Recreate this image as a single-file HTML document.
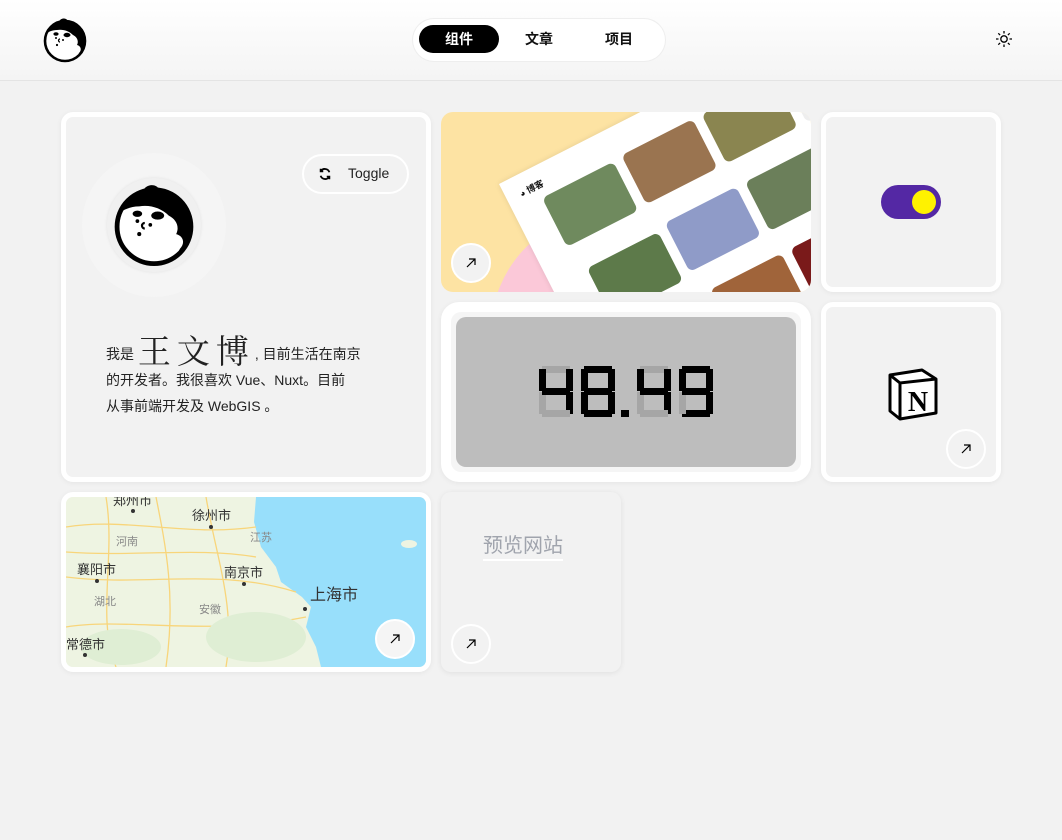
<!DOCTYPE html>
<html><head><meta charset="utf-8">
<style>
*{box-sizing:border-box;margin:0;padding:0}
body{width:1062px;height:840px;background:#f2f2f2;font-family:"Liberation Sans","Noto Sans CJK SC",sans-serif;position:relative;overflow:hidden;color:#111}
.hdr{position:absolute;left:0;top:0;width:1062px;height:81px;background:linear-gradient(#fff,#f4f4f4);border-bottom:1px solid #e4e4e4}
.nav{position:absolute;left:413px;top:19px;width:252px;height:42px;background:#fff;border-radius:21px;box-shadow:0 0 0 1px #eee}
.nav span{position:absolute;top:6px;height:28px;width:80px;line-height:28px;text-align:center;font-size:14px;font-weight:bold}
.card{position:absolute;background:#f2f2f2;border:5px solid #fff;border-radius:12px;box-shadow:0 1px 6px rgba(0,0,0,.06);overflow:hidden}
.arr{position:absolute;width:40px;height:40px;border-radius:50%;background:#f2f2f2;border:2px solid #fff}
.arr svg{position:absolute;left:11px;top:11px}
.th{position:absolute;width:80px;height:55px;border-radius:6px}
</style></head><body>
<svg width="0" height="0" style="position:absolute">
  <defs>
    <clipPath id="fc"><circle cx="26" cy="28" r="20"/></clipPath>
    <g id="face">
      <circle cx="26" cy="28" r="20" fill="#fff"/>
      <g clip-path="url(#fc)">
        <path d="M0 0 H52 V52 H45 C40 48 38 44 40 40 C43 37 42 33 38 32 C40 28 38 24 34 22 C30 18 24 16 18 17 C12 17 8 20 4 22 Z" fill="#000"/>
      </g>
      <circle cx="26" cy="28" r="20" fill="none" stroke="#000" stroke-width="2.6"/>
      <path d="M20 9 C21 5 27 4 29 8 C33 8 37 10 38 13 L26 13Z" fill="#000"/>
      <ellipse cx="28" cy="22" rx="3.5" ry="2.2" fill="#000"/>
      <ellipse cx="17" cy="21" rx="2.6" ry="1.7" fill="#000"/>
      <circle cx="17" cy="25" r="1"/><circle cx="24" cy="27" r="1"/><path d="M21 26 a1.5 1.5 0 1 0 0 3" fill="none" stroke="#000" stroke-width="1.2"/><circle cx="18" cy="32" r="1.1"/>
    </g>
  </defs>
</svg>
<div class="hdr">
  <svg style="position:absolute;left:39px;top:13px" width="52" height="52" viewBox="0 0 52 52"><use href="#face"/></svg>
  <div class="nav"><span style="left:6px;background:#000;color:#fff;border-radius:14px">组件</span><span style="left:86px">文章</span><span style="left:166px">项目</span></div>
  <svg style="position:absolute;left:995px;top:30px" width="18" height="18" viewBox="0 0 18 18" stroke="#000" stroke-width="1.3" fill="none"><circle cx="9" cy="9" r="3.2"/><path d="M9 1v2.5M9 14.5V17M1 9h2.5M14.5 9H17M3.3 3.3l1.8 1.8M12.9 12.9l1.8 1.8M3.3 14.7l1.8-1.8M12.9 5.1l1.8-1.8"/></svg>
</div>

<!-- profile card -->
<div class="card" style="left:61px;top:112px;width:370px;height:370px">
  <div style="position:absolute;left:16px;top:36px;width:144px;height:144px;border-radius:50%;background:#f5f5f5"></div>
  <div style="position:absolute;left:41px;top:61px;width:94px;height:94px;border-radius:50%;background:#f0f0f0;box-shadow:0 0 3px rgba(0,0,0,.08)"></div>
  <svg style="position:absolute;left:40px;top:58px" width="96" height="96" viewBox="0 0 52 52"><use href="#face"/></svg>
  <div style="position:absolute;left:236px;top:37px;width:107px;height:40px;border:2px solid #fff;border-radius:20px;font-size:14px;color:#222">
    <svg style="position:absolute;left:14px;top:11px" width="14" height="14" viewBox="0 0 16 16" fill="none" stroke="#000" stroke-width="2"><path d="M13 6A5.5 5.5 0 0 0 3 5M3 10a5.5 5.5 0 0 0 10 1"/><path d="M3 2v3h3M13 14v-3h-3"/></svg>
    <span style="position:absolute;left:44px;top:9px">Toggle</span>
  </div>
  <div style="position:absolute;left:40px;top:220px;width:300px;font-size:14px;line-height:26px;color:#222">
    我是 <span style="font-family:'Noto Serif CJK SC',serif;font-size:33px;letter-spacing:6px;vertical-align:-4px">王文博</span>, 目前生活在南京<br>的开发者。我很喜欢 Vue、Nuxt。目前<br>从事前端开发及 WebGIS 。
  </div>
</div>

<!-- blog card -->
<div style="position:absolute;left:441px;top:112px;width:370px;height:180px;border-radius:12px;overflow:hidden;background:#fde3a3">
  <div style="position:absolute;left:50px;top:100px;width:240px;height:240px;border-radius:50%;background:#fbc8d8"></div>
  <div style="position:absolute;left:58px;top:72px;width:380px;height:260px;background:#fff;transform:rotate(-27deg);transform-origin:0 0;box-shadow:0 0 6px rgba(0,0,0,.1)">
    <div style="position:absolute;left:14px;top:12px;font-size:9px;font-weight:bold">◕ 博客</div>
    <div class="th" style="left:32px;top:32px;background:#6f8a5e"></div>
    <div class="th" style="left:122px;top:30px;background:#9a7450"></div>
    <div class="th" style="left:212px;top:30px;background:#8a8550"></div>
    <div class="th" style="left:302px;top:30px;background:#eee"></div>
    <div class="th" style="left:40px;top:115px;background:#5d7a4a"></div>
    <div class="th" style="left:130px;top:110px;background:#8f9bc8"></div>
    <div class="th" style="left:220px;top:110px;background:#6b7f5a"></div>
    <div class="th" style="left:50px;top:195px;background:#c8102a"></div>
    <div class="th" style="left:140px;top:190px;background:#a0643a"></div>
    <div class="th" style="left:230px;top:190px;background:#7a1a1a"></div>
  </div>
  <div class="arr" style="left:10px;top:131px"><svg width="14" height="14" viewBox="0 0 14 14" stroke="#000" fill="none" stroke-width="1.2"><path d="M3 11L11 3M5 3h6v6"/></svg></div>
</div>

<!-- switch card -->
<div class="card" style="left:821px;top:112px;width:180px;height:180px">
  <div style="position:absolute;left:55px;top:68px;width:60px;height:34px;border-radius:17px;background:#5428a4"></div>
  <div style="position:absolute;left:86px;top:73px;width:24px;height:24px;border-radius:50%;background:#fff200"></div>
</div>

<!-- clock card -->
<div style="position:absolute;left:441px;top:302px;width:370px;height:180px;border-radius:18px;background:#fff;box-shadow:0 1px 6px rgba(0,0,0,.06)">
  <div style="position:absolute;left:10px;top:10px;width:350px;height:160px;border-radius:10px;background:#f5f5f5"></div>
  <div style="position:absolute;left:15px;top:15px;width:340px;height:150px;border-radius:10px;background:#bdbdbd"></div>
  <svg style="position:absolute;left:98px;top:64px" width="180" height="52" viewBox="0 0 180 52">
    <g>
      <rect x="3" y="0" width="28" height="7" fill="#a6a6a6"/><rect x="27" y="3" width="7" height="22" fill="#000"/><rect x="27" y="26" width="7" height="22" fill="#000"/><rect x="3" y="44" width="28" height="7" fill="#a6a6a6"/><rect x="0" y="26" width="7" height="22" fill="#a6a6a6"/><rect x="0" y="3" width="7" height="22" fill="#000"/><rect x="3" y="22" width="28" height="7" fill="#000"/>
    </g>
    <g transform="translate(42,0)" fill="#000">
      <rect x="3" y="0" width="28" height="7"/><rect x="27" y="3" width="7" height="22"/><rect x="27" y="26" width="7" height="22"/><rect x="3" y="44" width="28" height="7"/><rect x="0" y="26" width="7" height="22"/><rect x="0" y="3" width="7" height="22"/><rect x="3" y="22" width="28" height="7"/>
    </g>
    <rect x="82" y="44" width="8" height="7" fill="#000"/>
    <g transform="translate(98,0)">
      <rect x="3" y="0" width="28" height="7" fill="#a6a6a6"/><rect x="27" y="3" width="7" height="22" fill="#000"/><rect x="27" y="26" width="7" height="22" fill="#000"/><rect x="3" y="44" width="28" height="7" fill="#a6a6a6"/><rect x="0" y="26" width="7" height="22" fill="#a6a6a6"/><rect x="0" y="3" width="7" height="22" fill="#000"/><rect x="3" y="22" width="28" height="7" fill="#000"/>
    </g>
    <g transform="translate(140,0)">
      <rect x="3" y="0" width="28" height="7" fill="#000"/><rect x="27" y="3" width="7" height="22" fill="#000"/><rect x="27" y="26" width="7" height="22" fill="#000"/><rect x="3" y="44" width="28" height="7" fill="#000"/><rect x="0" y="26" width="7" height="22" fill="#a6a6a6"/><rect x="0" y="3" width="7" height="22" fill="#000"/><rect x="3" y="22" width="28" height="7" fill="#000"/>
    </g>
  </svg>
</div>

<!-- notion card -->
<div class="card" style="left:821px;top:302px;width:180px;height:180px">
  <svg style="position:absolute;left:60px;top:60px" width="52" height="54" viewBox="0 0 52 54">
    <path d="M4 8 L36 3 L50 12 L50 46 L14 52 L4 44 Z" fill="#fff" stroke="#000" stroke-width="3" stroke-linejoin="round"/>
    <path d="M4 8 L14 16 L50 12 M14 16 L14 52" fill="none" stroke="#000" stroke-width="3"/>
    <text x="32" y="44" text-anchor="middle" font-family="Liberation Serif,serif" font-weight="bold" font-size="28">N</text>
  </svg>
  <div class="arr" style="left:120px;top:122px"><svg width="14" height="14" viewBox="0 0 14 14" stroke="#000" fill="none" stroke-width="1.2"><path d="M3 11L11 3M5 3h6v6"/></svg></div>
</div>

<!-- map card -->
<div class="card" style="left:61px;top:492px;width:370px;height:180px">
  <svg style="position:absolute;left:0;top:0" width="360" height="170" viewBox="0 0 360 170">
    <rect width="360" height="170" fill="#eef4e2"/>
    <path d="M190 0 L360 0 L360 170 L255 170 L250 150 L240 130 L245 110 L236 100 L215 85 L210 70 L195 50 L188 25 Z" fill="#98dffb"/>
    <path d="M0 30 C60 20 120 40 190 30 M40 0 C50 60 30 120 50 170 M90 0 C100 50 110 100 100 170 M0 80 C80 90 150 70 230 95 M0 130 C60 120 140 140 240 120 M140 0 C150 60 170 110 160 170 M0 55 C70 60 130 50 190 60" stroke="#f8d57a" stroke-width="1.3" fill="none"/>
    <ellipse cx="55" cy="150" rx="40" ry="18" fill="#dfeed4"/>
    <ellipse cx="190" cy="140" rx="50" ry="25" fill="#dfeed4"/>
    <ellipse cx="343" cy="47" rx="8" ry="4" fill="#eef4e2"/>
    <g font-size="13" fill="#333" font-family="Liberation Sans,'Noto Sans CJK SC',sans-serif">
      <text x="47" y="8">郑州市</text><circle cx="67" cy="14" r="2"/>
      <text x="126" y="23">徐州市</text><circle cx="145" cy="30" r="2"/>
      <text x="11" y="77">襄阳市</text><circle cx="31" cy="84" r="2"/>
      <text x="158" y="80">南京市</text><circle cx="178" cy="87" r="2"/>
      <text x="244" y="103" font-size="16">上海市</text><circle cx="239" cy="112" r="2"/>
      <text x="0" y="152">常德市</text><circle cx="19" cy="158" r="2"/>
      <g fill="#888" font-size="11"><text x="50" y="48">河南</text><text x="184" y="44">江苏</text><text x="28" y="108">湖北</text><text x="133" y="116">安徽</text></g>
    </g>
  </svg>
  <div class="arr" style="left:309px;top:122px;background:#f5f5f5"><svg width="14" height="14" viewBox="0 0 14 14" stroke="#000" fill="none" stroke-width="1.2"><path d="M3 11L11 3M5 3h6v6"/></svg></div>
</div>

<!-- preview card -->
<div style="position:absolute;left:441px;top:492px;width:180px;height:180px;border-radius:10px;background:#f2f2f2;box-shadow:0 1px 6px rgba(0,0,0,.08)">
  <div style="position:absolute;left:42px;top:41px;font-size:20px;color:#a0a4ad;border-bottom:2px solid #fff;line-height:26px">预览网站</div>
  <div class="arr" style="left:10px;top:132px"><svg width="14" height="14" viewBox="0 0 14 14" stroke="#000" fill="none" stroke-width="1.2"><path d="M3 11L11 3M5 3h6v6"/></svg></div>
</div>
</body></html>
